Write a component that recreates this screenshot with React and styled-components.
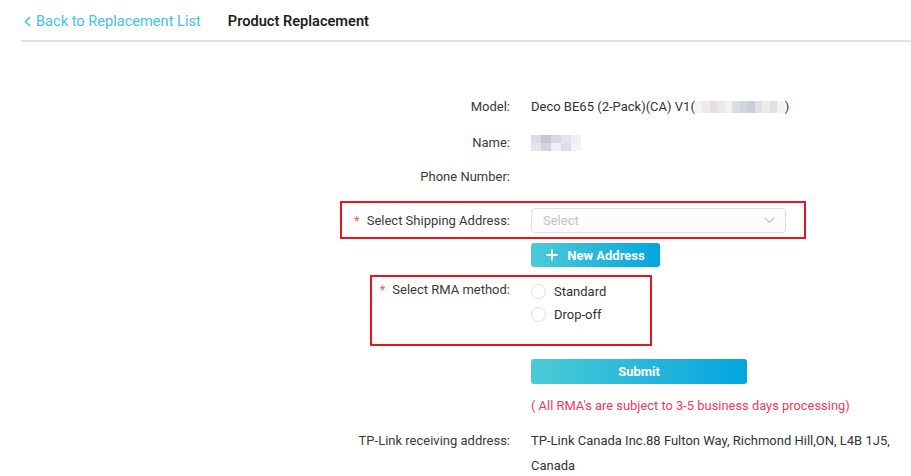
import styled, { createGlobalStyle } from 'styled-components'

const GlobalStyle = createGlobalStyle`
  body {
    margin: 0;
    background: #fff;
    font-family: Roboto, "Liberation Sans", Arial, sans-serif;
    color: #333;
  }
`

const Page = styled.div`
  width: 911px;
  min-height: 476px;
  overflow: hidden;
`

const Header = styled.div`
  height: 42px;
  margin-left: 21px;
  padding-left: 3px;
  padding-top: 2px;
  box-sizing: border-box;
  display: flex;
  align-items: center;
  border-bottom: 2px solid #e4e4e4;
  font-size: 14.6px;
`

const BackLink = styled.a`
  display: flex;
  align-items: center;
  gap: 5px;
  color: #45c2e4;
  text-decoration: none;
  cursor: pointer;
`

const Title = styled.span`
  margin-left: 27px;
  font-weight: 600;
  color: #1f1f1f;
`

const Form = styled.div`
  padding-top: 55px;
  display: flex;
  flex-direction: column;
`

const Row = styled.div`
  position: relative;
  display: grid;
  grid-template-columns: 510px 360px;
  column-gap: 21px;
  align-items: ${(p) => (p.$top ? 'start' : 'center')};
  margin-top: ${(p) => p.$gap || 0}px;
  font-size: 13px;
  line-height: ${(p) => p.$lh || 20}px;

  ${(p) =>
    p.$box &&
    `
    &::after {
      content: '';
      position: absolute;
      left: ${p.$box.left}px;
      width: ${p.$box.width}px;
      top: ${p.$box.top}px;
      height: ${p.$box.height}px;
      border: 2px solid #e5161f;
      box-sizing: border-box;
      pointer-events: none;
    }
  `}
`

const Label = styled.div`
  text-align: right;
  color: #3a3a3a;
`

const Required = styled.span`
  color: #f15b5b;
  margin-right: 7px;
`

const Value = styled.div`
  color: #333;
  display: flex;
  flex-wrap: wrap;
  align-items: center;
`

const Pixels = styled.span`
  display: inline-flex;
  height: ${(p) => p.$h}px;
  > span {
    width: ${(p) => p.$w}px;
    height: 100%;
  }
`

const SelectBox = styled.div`
  width: 255px;
  height: 25px;
  box-sizing: border-box;
  border: 1px solid #dcdfe6;
  border-radius: 4px;
  background: #fcfcfc;
  display: flex;
  align-items: center;
  justify-content: space-between;
  padding: 0 10px 0 11px;
  color: #c0c4cc;
  font-size: 13px;
`

const GradientButton = styled.button`
  width: ${(p) => p.$w}px;
  height: ${(p) => p.$h}px;
  border: none;
  border-radius: 3px;
  background: linear-gradient(90deg, #4ccbd6 0%, #04a5e0 100%);
  color: #fff;
  font-family: inherit;
  font-size: 13px;
  font-weight: 700;
  display: flex;
  align-items: center;
  justify-content: center;
  gap: 9px;
  padding: 0;
  cursor: pointer;
`

const RadioGroup = styled.div`
  display: flex;
  flex-direction: column;
`

const RadioItem = styled.label`
  display: flex;
  align-items: center;
  gap: 8px;
  height: 23px;
  color: #333;
`

const RadioCircle = styled.span`
  width: 15px;
  height: 15px;
  box-sizing: border-box;
  border: 1px solid #dcdfe6;
  border-radius: 50%;
  background: #fff;
`

const Note = styled.div`
  color: #f0395d;
  font-size: 12.9px;
`

const blur1 = ['#f4f4f6', '#eceaee', '#e4dde2', '#e9e9ec', '#f1f1f3', '#dcdde3', '#d0d6de', '#c9ced8', '#dfe0e5', '#ecebee', '#e2dfe1', '#f3f3f5']
const blur2 = ['#dadbe3', '#c5c6ce', '#d6d7df', '#e4e5ec', '#eef0f5']
const blur2b = ['#e4e4ea', '#d3d4dc', '#eff0f5', '#dcdde5', '#f2f3f7']

const Blur = ({ colors, w, h }) => (
  <Pixels $w={w} $h={h}>
    {colors.map((c, i) => (
      <span key={i} style={{ background: c }} />
    ))}
  </Pixels>
)

export default function App() {
  return (
    <Page>
      <GlobalStyle />
      <Header>
        <BackLink>
          <svg width="7" height="11" viewBox="0 0 7 11" fill="none">
            <path d="M6 1L1.5 5.5L6 10" stroke="#45c2e4" strokeWidth="1.5" />
          </svg>
          Back to Replacement List
        </BackLink>
        <Title>Product Replacement</Title>
      </Header>

      <Form>
        <Row>
          <Label>Model:</Label>
          <Value>
            Deco BE65 (2-Pack)(CA) V1(
            <Blur colors={blur1} w={7.5} h={12} />)
          </Value>
        </Row>
        <Row $gap={16}>
          <Label>Name:</Label>
          <Value>
            <span style={{ display: 'inline-flex', flexDirection: 'column' }}>
              <Blur colors={blur2} w={10} h={8} />
              <Blur colors={blur2b} w={10} h={8} />
            </span>
          </Value>
        </Row>
        <Row $gap={14}>
          <Label>Phone Number:</Label>
          <Value />
        </Row>
        <Row $gap={21} $box={{ left: 340, width: 466, top: -7, height: 38 }}>
          <Label>
            <Required>*</Required>Select Shipping Address:
          </Label>
          <Value>
            <SelectBox>
              Select
              <svg width="11" height="7" viewBox="0 0 11 7" fill="none">
                <path d="M1 1l4.5 4.5L10 1" stroke="#c0c4cc" strokeWidth="1.2" />
              </svg>
            </SelectBox>
          </Value>
        </Row>
        <Row $gap={10}>
          <Label />
          <Value>
            <GradientButton $w={129} $h={24}>
              <svg width="12" height="12" viewBox="0 0 12 12">
                <path d="M6 0.5v11M0.5 6h11" stroke="#fff" strokeWidth="1.8" />
              </svg>
              New Address
            </GradientButton>
          </Value>
        </Row>
        <Row $gap={13} $top $box={{ left: 370, width: 282, top: -5, height: 71 }}>
          <Label>
            <Required>*</Required>Select RMA method:
          </Label>
          <RadioGroup>
            <RadioItem>
              <RadioCircle />
              Standard
            </RadioItem>
            <RadioItem>
              <RadioCircle />
              Drop-off
            </RadioItem>
          </RadioGroup>
        </Row>
        <Row $gap={33}>
          <Label />
          <Value>
            <GradientButton $w={216} $h={25}>Submit</GradientButton>
          </Value>
        </Row>
        <Row $gap={12}>
          <Label />
          <Note>( All RMA's are subject to 3-5 business days processing)</Note>
        </Row>
        <Row $gap={12} $top $lh={25}>
          <Label>TP-Link receiving address:</Label>
          <Value>TP-Link Canada Inc.88 Fulton Way, Richmond Hill,ON, L4B 1J5, Canada</Value>
        </Row>
      </Form>
    </Page>
  )
}
